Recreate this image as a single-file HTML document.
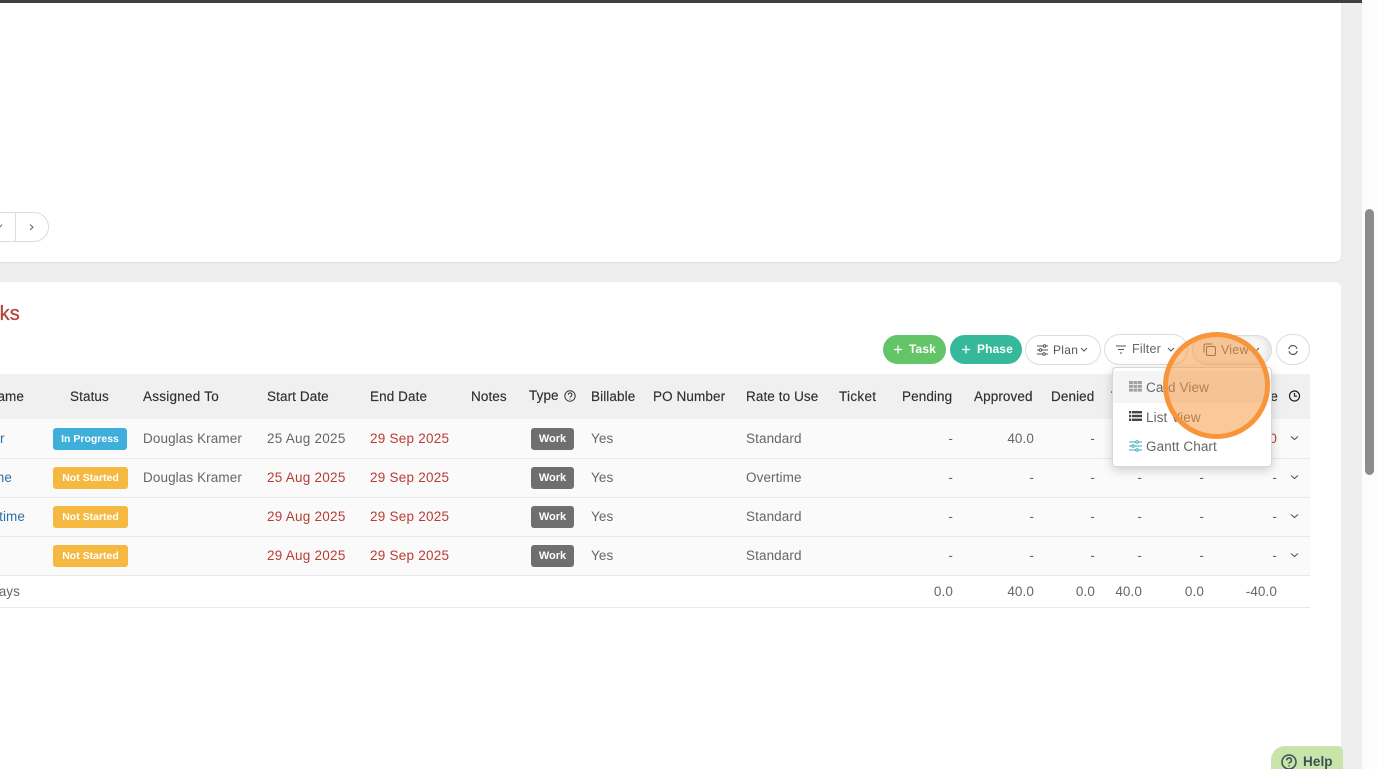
<!DOCTYPE html>
<html><head><meta charset="utf-8">
<style>
html,body{margin:0;padding:0;width:1377px;height:769px;overflow:hidden;background:#eee;font-family:"Liberation Sans",sans-serif;}
#p{position:absolute;left:0;top:0;width:1377px;height:769px;overflow:hidden;background:#eee}
.a{position:absolute}
.t{position:absolute;white-space:nowrap;font-size:13.5px;line-height:20px;letter-spacing:.1px;color:#666;margin-top:1px}
.d{letter-spacing:.25px}
.h{color:#2f2f2f;top:386px;-webkit-text-stroke:.15px #2f2f2f}
.r{text-align:right;width:80px}
.red{color:#b83d36}
.w{position:absolute;left:531px;width:43px;height:22px;background:#6f6f6f;border-radius:3px;color:#fff;font-size:11px;font-weight:bold;line-height:22px;text-align:center}
.b{position:absolute;left:53px;width:75px;height:22px;border-radius:3px;color:#fff;font-size:10.5px;font-weight:bold;line-height:22px;text-align:center}
.row{position:absolute;left:0;width:1310px;background:#fafafa;border-bottom:1px solid #e9e9e9}
.pill{position:absolute;box-sizing:border-box;border:1px solid #dcdcdc;border-radius:16px;background:#fff}
svg{position:absolute;overflow:visible}
</style></head><body><div id="p">
<div class="a" style="left:1362px;top:0;width:15px;height:769px;background:#fcfcfc"></div>
<div class="a" style="left:1365px;top:209px;width:9px;height:266px;background:#8c8c8c;border-radius:5px"></div>
<div class="a" style="left:0;top:0;width:1341px;height:262px;background:#fff;border-bottom-right-radius:6px;box-shadow:0 1px 1px #ddd"></div>
<div class="a" style="left:0;top:282px;width:1341px;height:487px;background:#fff;border-top-right-radius:6px"></div>
<div class="a" style="left:0;top:0;width:1362px;height:3px;background:#3f3f3f"></div>

<div class="pill" style="left:-30px;top:212px;width:79px;height:30px"></div>
<div class="a" style="left:15px;top:213px;width:1px;height:28px;background:#ddd"></div>
<svg style="left:0;top:0" width="60" height="240"><path d="M-2 225l2 2 2-2.500" fill="none" stroke="#666" stroke-width="1"/><path d="M30 224.500l3 2.700-3 2.800" fill="none" stroke="#666" stroke-width="1"/></svg>

<div class="t" style="right:1357px;top:301px;font-size:20px;line-height:24px;color:#b5453a;letter-spacing:.2px;-webkit-text-stroke:.3px #b5453a">ks</div>

<div class="pill" style="left:883px;top:335px;width:63px;height:29px;border:0;background:#63c468"></div>
<svg style="left:893px;top:344px" width="11" height="11" stroke="#fff" stroke-width="1.300"><path d="M1 5.500h8M5 1.500v8"/></svg>
<div class="t" style="left:909px;top:338px;color:#fff;font-weight:bold;font-size:12px;letter-spacing:.1px">Task</div>
<div class="pill" style="left:950px;top:335px;width:72px;height:29px;border:0;background:#35b99a"></div>
<svg style="left:961px;top:344px" width="11" height="11" stroke="#fff" stroke-width="1.300"><path d="M1 5.500h8M5 1.500v8"/></svg>
<div class="t" style="left:977px;top:338px;color:#fff;font-weight:bold;font-size:12px">Phase</div>
<div class="pill" style="left:1025px;top:335px;width:76px;height:30px"></div>
<svg style="left:1037px;top:344px" width="12" height="12" fill="none" stroke="#555" stroke-width="1"><path d="M0 2h11M0 6h11M0 10h11"/><circle cx="7.500" cy="2" r="1.300" fill="#fff"/><circle cx="3.500" cy="6" r="1.300" fill="#fff"/><circle cx="7" cy="10" r="1.300" fill="#fff"/></svg>
<div class="t" style="left:1053px;top:339px;font-size:12px;letter-spacing:.3px;color:#555">Plan</div>
<svg style="left:1080px;top:347px" width="9" height="6" fill="none" stroke="#555"><path d="M1 1l3 3 3-3"/></svg>
<div class="pill" style="left:1104px;top:334px;width:84px;height:31px"></div>
<svg style="left:1116px;top:345px" width="11" height="9" fill="none" stroke="#555"><path d="M0 1h10M2 4.500h6M4 8h2"/></svg>
<div class="t" style="left:1132px;top:338px;font-size:12.500px;letter-spacing:.2px;color:#666">Filter</div>
<svg style="left:1167px;top:347px" width="9" height="6" fill="none" stroke="#555"><path d="M1 1l3 3 3-3"/></svg>
<div class="pill" style="left:1192px;top:335px;width:80px;height:30px;background:#f7f7f7;box-shadow:inset -4px 0 6px #e6e6e6"></div>
<svg style="left:1203px;top:343px" width="14" height="14" fill="none" stroke="#555" stroke-width="1"><rect x="3.500" y="3.500" width="9" height="9" rx="1.500"/><path d="M1 9.500V2.500a1.500 1.500 0 0 1 1.500-1.500h7"/></svg>
<div class="t" style="left:1221px;top:339px;font-size:12.500px;letter-spacing:.2px;color:#666">View</div>
<svg style="left:1252px;top:347px" width="9" height="6" fill="none" stroke="#555"><path d="M1 1l3 3 3-3"/></svg>
<div class="pill" style="left:1276px;top:334px;width:34px;height:31px"></div>
<svg style="left:1288px;top:345px" width="10" height="10" fill="none" stroke="#444" stroke-width="1.100"><path d="M0.800 4A4.200 4.200 0 0 1 9 3.800M9.200 6A4.200 4.200 0 0 1 1 6.200"/></svg>

<div class="a" style="left:0;top:374px;width:1310px;height:45px;background:#f0f0f0"></div>
<div class="row" style="top:419px;height:39px"></div>
<div class="row" style="top:459px;height:38px"></div>
<div class="row" style="top:498px;height:38px"></div>
<div class="row" style="top:537px;height:38px"></div>
<div class="a" style="left:0;top:607px;width:1310px;height:1px;background:#e9e9e9"></div>

<div class="t h" style="right:1353px">ame</div>
<div class="t h" style="left:70px">Status</div>
<div class="t h" style="left:143px;letter-spacing:.25px">Assigned To</div>
<div class="t h" style="left:267px">Start Date</div>
<div class="t h" style="left:370px">End Date</div>
<div class="t h" style="left:471px">Notes</div>
<div class="t h" style="left:529px;top:385px">Type</div>
<svg style="left:564px;top:390px" width="12" height="12" fill="none" stroke="#333"><circle cx="6" cy="6" r="5.200"/><path d="M4.300 4.800a1.800 1.800 0 1 1 2.500 1.600c-.6.300-.8.600-.8 1.100"/><path d="M6 8.800v.8"/></svg>
<div class="t h" style="left:591px">Billable</div>
<div class="t h" style="left:653px">PO Number</div>
<div class="t h" style="left:746px">Rate to Use</div>
<div class="t h" style="left:839px;letter-spacing:.3px">Ticket</div>
<div class="t h" style="left:902px">Pending</div>
<div class="t h" style="left:974px">Approved</div>
<div class="t h" style="left:1051px">Denied</div>
<div class="t h" style="left:1111px">T</div>
<div class="t h" style="right:99px">e</div>
<svg style="left:1288px;top:390px" width="13" height="13" fill="none" stroke="#222" stroke-width="1.200"><circle cx="6.500" cy="6" r="5"/><path d="M6.500 3v3.200h2.500"/></svg>

<!-- rows -->
<div class="t" style="left:0;top:428px;color:#2a70a8">r</div>
<div class="b" style="top:428px;width:74px;background:#3eaedb">In Progress</div>
<div class="t" style="left:143px;top:428px">Douglas Kramer</div>
<div class="t d" style="left:267px;top:428px">25 Aug 2025</div>
<div class="t red d" style="left:370px;top:428px">29 Sep 2025</div>
<div class="w" style="top:428px">Work</div>
<div class="t" style="left:591px;top:428px">Yes</div>
<div class="t" style="left:746px;top:428px">Standard</div>
<div class="t r" style="left:873px;top:428px">-</div>
<div class="t r" style="left:954px;top:428px">40.0</div>
<div class="t r" style="left:1015px;top:428px">-</div>
<div class="t r red" style="left:1197px;top:428px">0</div>

<div class="t" style="right:1365px;top:467px;color:#2a70a8">me</div>
<div class="b" style="top:467px;background:#f5b942">Not Started</div>
<div class="t" style="left:143px;top:467px">Douglas Kramer</div>
<div class="t red d" style="left:267px;top:467px">25 Aug 2025</div>
<div class="t red d" style="left:370px;top:467px">29 Sep 2025</div>
<div class="w" style="top:467px">Work</div>
<div class="t" style="left:591px;top:467px">Yes</div>
<div class="t" style="left:746px;top:467px">Overtime</div>
<div class="t r" style="left:873px;top:467px">-</div>
<div class="t r" style="left:954px;top:467px">-</div>
<div class="t r" style="left:1015px;top:467px">-</div>
<div class="t r" style="left:1062px;top:467px">-</div>
<div class="t r" style="left:1124px;top:467px">-</div>
<div class="t r" style="left:1197px;top:467px">-</div>

<div class="t" style="right:1352px;top:506px;color:#2a70a8">time</div>
<div class="b" style="top:506px;background:#f5b942">Not Started</div>
<div class="t red d" style="left:267px;top:506px">29 Aug 2025</div>
<div class="t red d" style="left:370px;top:506px">29 Sep 2025</div>
<div class="w" style="top:506px">Work</div>
<div class="t" style="left:591px;top:506px">Yes</div>
<div class="t" style="left:746px;top:506px">Standard</div>
<div class="t r" style="left:873px;top:506px">-</div>
<div class="t r" style="left:954px;top:506px">-</div>
<div class="t r" style="left:1015px;top:506px">-</div>
<div class="t r" style="left:1062px;top:506px">-</div>
<div class="t r" style="left:1124px;top:506px">-</div>
<div class="t r" style="left:1197px;top:506px">-</div>

<div class="b" style="top:545px;background:#f5b942">Not Started</div>
<div class="t red d" style="left:267px;top:545px">29 Aug 2025</div>
<div class="t red d" style="left:370px;top:545px">29 Sep 2025</div>
<div class="w" style="top:545px">Work</div>
<div class="t" style="left:591px;top:545px">Yes</div>
<div class="t" style="left:746px;top:545px">Standard</div>
<div class="t r" style="left:873px;top:545px">-</div>
<div class="t r" style="left:954px;top:545px">-</div>
<div class="t r" style="left:1015px;top:545px">-</div>
<div class="t r" style="left:1062px;top:545px">-</div>
<div class="t r" style="left:1124px;top:545px">-</div>
<div class="t r" style="left:1197px;top:545px">-</div>

<svg style="left:1290px;top:435px" width="9" height="125" fill="none" stroke="#555" stroke-width="1.100"><path d="M1 1.500l3.500 3 3.500-3M1 40.500l3.500 3 3.500-3M1 79.500l3.500 3 3.500-3M1 118.500l3.500 3 3.500-3"/></svg>

<div class="t" style="right:1357px;top:581px">ays</div>
<div class="t r" style="left:873px;top:581px">0.0</div>
<div class="t r" style="left:954px;top:581px">40.0</div>
<div class="t r" style="left:1015px;top:581px">0.0</div>
<div class="t r" style="left:1062px;top:581px">40.0</div>
<div class="t r" style="left:1124px;top:581px">0.0</div>
<div class="t r" style="left:1197px;top:581px">-40.0</div>

<!-- menu -->
<div class="a" style="left:1112px;top:367px;width:160px;height:100px;background:#fff;border:1px solid #d8d8d8;box-sizing:border-box;border-radius:4px;box-shadow:0 3px 10px rgba(0,0,0,.18)"></div>
<div class="a" style="left:1113px;top:371px;width:158px;height:32px;background:#f5f5f5"></div>
<svg style="left:1129px;top:381px" width="13" height="11" fill="#a0a0a0"><rect x="0" y="0" width="3.900" height="3"/><rect x="4.500" y="0" width="3.900" height="3"/><rect x="9" y="0" width="3.900" height="3"/><rect x="0" y="3.800" width="3.900" height="3"/><rect x="4.500" y="3.800" width="3.900" height="3"/><rect x="9" y="3.800" width="3.900" height="3"/><rect x="0" y="7.600" width="3.900" height="3"/><rect x="4.500" y="7.600" width="3.900" height="3"/><rect x="9" y="7.600" width="3.900" height="3"/></svg>
<div class="t" style="left:1146px;top:377px">Card View</div>
<svg style="left:1129px;top:411px" width="13" height="11" fill="#444"><rect x="0" y="0" width="2" height="2.400"/><rect x="2.800" y="0" width="10.200" height="2.400"/><rect x="0" y="3.800" width="2" height="2.400"/><rect x="2.800" y="3.800" width="10.200" height="2.400"/><rect x="0" y="7.600" width="2" height="2.400"/><rect x="2.800" y="7.600" width="10.200" height="2.400"/></svg>
<div class="t" style="left:1146px;top:407px">List View</div>
<svg style="left:1129px;top:440px" width="13" height="12" fill="none" stroke="#3fa9bd"><path d="M0 2h13M0 6h13M0 10h13"/><circle cx="8" cy="2" r="1.300" fill="#fff"/><circle cx="4" cy="6" r="1.300" fill="#fff"/><circle cx="8" cy="10" r="1.300" fill="#fff"/></svg>
<div class="t" style="left:1146px;top:436px">Gantt Chart</div>

<!-- highlight circle -->
<div class="a" style="left:1163px;top:332px;width:107px;height:107px;box-sizing:border-box;border:5px solid #f7953b;border-radius:50%;background:rgba(247,149,59,.52)"></div>

<!-- help -->
<div class="a" style="left:1271px;top:746px;width:72px;height:23px;background:#c9e4ab;border-top-left-radius:14px;border-top-right-radius:5px"></div>
<svg style="left:1281px;top:754px" width="16" height="16" fill="none" stroke="#3d4f55" stroke-width="1.500"><circle cx="8" cy="8" r="7"/><path d="M5.800 6.300a2.300 2.300 0 1 1 3.300 2c-.8.400-1.100.8-1.100 1.500"/><path d="M8 11.200v1.200"/></svg>
<div class="t" style="left:1303px;top:751px;font-size:13.500px;font-weight:bold;color:#3d4f55;letter-spacing:.1px">Help</div>
</div></body></html>
